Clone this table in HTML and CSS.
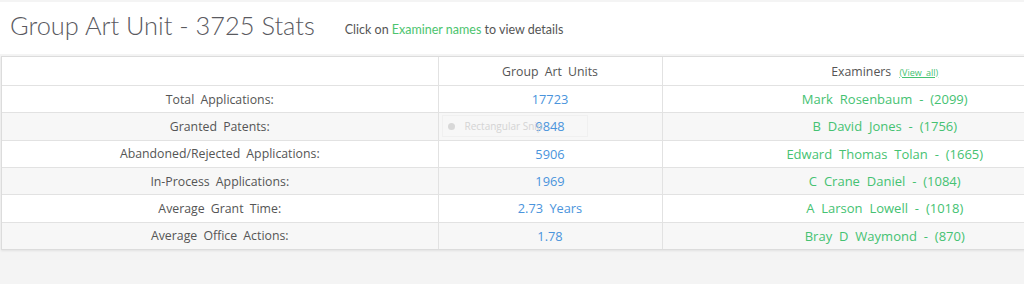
FILE: index.html
```html
<!DOCTYPE html>
<html>
<head>
<meta charset="utf-8">
<link rel="stylesheet" href="styles.css">
</head>
<body>
<div class="header">
  <h1 class="title">Group Art Unit - 3725 Stats</h1>
  <p class="hint">Click on <span class="green">Examiner names</span> to view details</p>
</div>
<div class="panel">
  <table class="stats">
    <colgroup><col class="c1"><col class="c2"><col class="c3"></colgroup>
    <tr class="head"><th></th><th>Group Art Units</th><th>Examiners <a class="viewall">(View all)</a></th></tr>
    <tr><td>Total Applications:</td><td class="num">17723</td><td class="ex">Mark Rosenbaum - (2099)</td></tr>
    <tr class="alt"><td>Granted Patents:</td><td class="num snipcell"><span class="snip"><span class="dot"></span>Rectangular Snip</span>9848</td><td class="ex">B David Jones - (1756)</td></tr>
    <tr><td>Abandoned/Rejected Applications:</td><td class="num">5906</td><td class="ex">Edward Thomas Tolan - (1665)</td></tr>
    <tr class="alt"><td>In-Process Applications:</td><td class="num">1969</td><td class="ex">C Crane Daniel - (1084)</td></tr>
    <tr><td>Average Grant Time:</td><td class="num">2.73 Years</td><td class="ex">A Larson Lowell - (1018)</td></tr>
    <tr class="alt"><td>Average Office Actions:</td><td class="num">1.78</td><td class="ex">Bray D Waymond - (870)</td></tr>
  </table>
</div>
</body>
</html>
```
FILE: styles.css
```css
html, body {
  margin: 0;
  padding: 0;
  background: #f4f4f4;
  overflow: hidden;
  width: 1024px;
  height: 284px;
}
.header {
  margin-top: 2px;
  height: 52px;
  background: #fff;
  display: flex;
  align-items: baseline;
  padding-left: 10px;
  box-sizing: border-box;
  padding-top: 8px;
}
.title {
  margin: 0;
  font-family: "Lato", "Open Sans", sans-serif;
  font-weight: 300;
  font-size: 25.4px;
  color: #5a5a5f;
  letter-spacing: 0;
}
.hint {
  margin: 0 0 0 30px;
  font-family: "Lato", sans-serif;
  font-size: 12.5px;
  color: #555;
  position: relative;
  top: -1px;
}
.green { color: #4cc46e; }
.panel {
  margin-top: 2px;
  margin-left: 1px;
  width: 1106px;
  background: #fff;
  border: 1px solid #dcdcdc;
  box-shadow: 0 1px 2px rgba(0,0,0,0.08);
}
.stats {
  width: 100%;
  border-collapse: collapse;
  font-family: "Open Sans", sans-serif;
  font-size: 12.3px;
  word-spacing: 3px;
  color: #555;
}
.c1 { width: 436px; }
.c2 { width: 224px; }
.stats th, .stats td {
  border: 1px solid #e2e2e2;
  text-align: center;
  font-weight: normal;
  height: 26.33px;
  padding: 0;
}
.stats tr:first-child th { border-top: none; }
.stats th:first-child, .stats td:first-child { border-left: none; }
.stats tr:last-child td { border-bottom: none; }
.stats tr.head th { height: 28px; }
.alt td { background: #f7f7f7; }
.num { color: #4a94dc; font-size: 12.8px; }
.ex { color: #45c272; font-size: 13px; word-spacing: 3.5px; }
.viewall {
  font-size: 9px;
  color: #45c272;
  text-decoration: underline;
  word-spacing: 2px;
  margin-left: 2px;
}
.snipcell { position: relative; }
.snip {
  position: absolute;
  left: 3px;
  top: 2px;
  width: 146px;
  height: 22px;
  display: flex;
  align-items: center;
  font-size: 10px;
  word-spacing: 0;
  color: #d4d4d4;
  border: 1px solid #f0f0f0;
  box-sizing: border-box;
  padding-left: 5px;
  gap: 10px;
}
.dot {
  width: 7px;
  height: 7px;
  border-radius: 50%;
  background: #d8d8d8;
}
```
